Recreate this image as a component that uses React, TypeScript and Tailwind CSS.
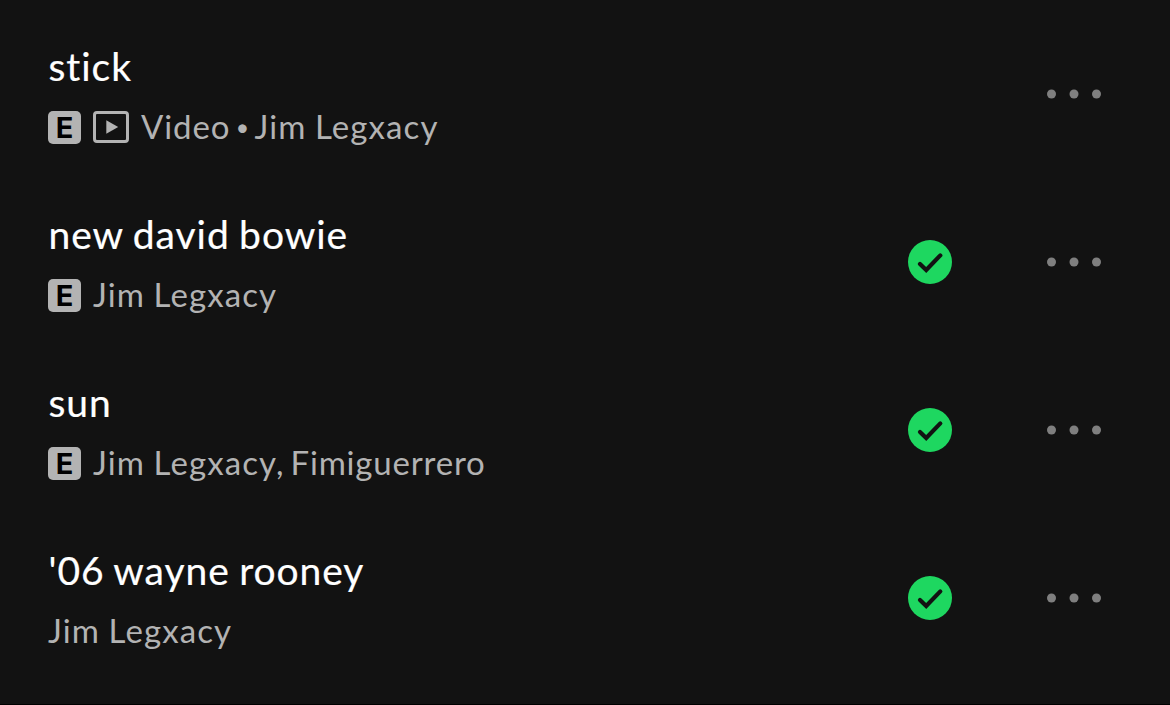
type Track = {
  title: string;
  artists: string[];
  explicit?: boolean;
  video?: boolean;
  saved?: boolean;
};

const tracks: Track[] = [
  { title: "stick", artists: ["Jim Legxacy"], explicit: true, video: true },
  { title: "new david bowie", artists: ["Jim Legxacy"], explicit: true, saved: true },
  { title: "sun", artists: ["Jim Legxacy", "Fimiguerrero"], explicit: true, saved: true },
  { title: "'06 wayne rooney", artists: ["Jim Legxacy"], saved: true },
];

function ExplicitBadge() {
  return (
    <span className="mr-3 flex size-[33px] items-center justify-center rounded-[5px] bg-[#b3b3b3] font-[Inter] text-[29px] leading-none font-bold tracking-normal text-black">
      E
    </span>
  );
}

function VideoIcon() {
  return (
    <svg width="36" height="32" viewBox="0 0 36 32" className="mr-3" fill="none">
      <rect x="1.5" y="1.5" width="33" height="29" rx="2.5" stroke="#b3b3b3" strokeWidth="3" />
      <path d="M13.3 9.2v13.6L25.2 16z" fill="#b3b3b3" />
    </svg>
  );
}

function SavedIcon() {
  return (
    <svg width="44" height="44" viewBox="0 0 44 44" fill="none">
      <circle cx="22" cy="22" r="22" fill="#1ed760" />
      <path d="M12 24l6.2 6L32.3 15.4" stroke="#121212" strokeWidth="4.2" strokeLinecap="round" />
    </svg>
  );
}

function MoreIcon() {
  return (
    <svg width="54" height="10" viewBox="0 0 54 10" fill="#7f7f7f">
      <circle cx="4.5" cy="5" r="4.5" />
      <circle cx="27" cy="5" r="4.5" />
      <circle cx="49.5" cy="5" r="4.5" />
    </svg>
  );
}

function TrackRow({ track }: { track: Track }) {
  return (
    <li className="flex h-[168px] items-center pr-[69px] pl-12">
      <div className="flex-1">
        <div className="h-[58px] pt-px pl-[0.5px] text-[39px] leading-[58px] tracking-[0.95px] text-white [-webkit-text-stroke:0.2px_white] [word-spacing:-1.5px]">
          {track.title}
        </div>
        <div className="mt-2 flex h-[50px] items-center text-[33px] tracking-[1.1px] text-[#b3b3b3] [word-spacing:-1px]">
          {track.explicit && <ExplicitBadge />}
          {track.video && (
            <>
              <VideoIcon />
              <span className="tracking-[0.9px]">Video</span>
              <span className="w-[24px] text-center text-[23px] tracking-normal">•</span>
            </>
          )}
          <div className="flex gap-[6px]">
            {track.artists.map((artist, i) => (
              <span key={artist} className="last:not-first:tracking-[0.8px]">
                {artist}
                {i < track.artists.length - 1 && ","}
              </span>
            ))}
          </div>
        </div>
      </div>
      {track.saved && <SavedIcon />}
      <button className="ml-[95px]" aria-label="More options">
        <MoreIcon />
      </button>
    </li>
  );
}

export default function App() {
  return (
    <main className="h-[705px] w-[1170px] overflow-hidden border-b border-black bg-[#121212] pt-[10px] font-[Lato,sans-serif]">
      <ul>
        {tracks.map((track) => (
          <TrackRow key={track.title} track={track} />
        ))}
      </ul>
    </main>
  );
}
